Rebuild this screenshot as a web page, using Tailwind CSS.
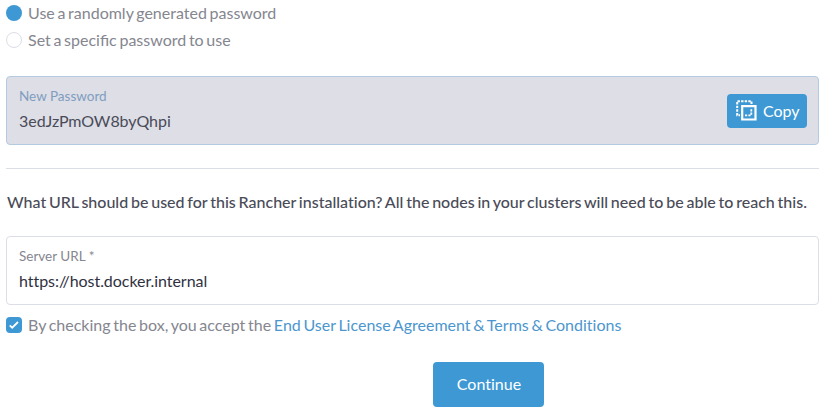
<!DOCTYPE html>
<html lang="en">
<head>
<meta charset="utf-8">
<title>Rancher setup</title>
<script src="https://cdn.jsdelivr.net/npm/@tailwindcss/browser@4"></script>
</head>
<body class="h-[412px] overflow-hidden bg-white font-['Lato',sans-serif] text-[16px] leading-5 text-[#4a4b58] [font-variant-ligatures:none] [word-spacing:-1.4px]">
<main class="flex flex-col pl-[6px] pr-[6px]">
  <div class="mt-[3px] flex h-5 items-center gap-[6px] text-[#85868f]">
    <span class="size-4 rounded-full bg-[#3d98d3]"></span><span class="pb-px">Use a randomly generated password</span>
  </div>
  <div class="mt-[7px] flex h-5 items-center gap-[6px] text-[#85868f]">
    <span class="size-4 rounded-full border border-[#dcdee7] bg-white"></span><span class="pb-px [font-variant-ligatures:normal]">Set a specific password to use</span>
  </div>
  <section class="mt-[26px] flex h-[69px] items-center justify-between rounded border border-[#b3cbe1] bg-[#dddee6] pl-3 pr-[11px]">
    <div class="flex flex-col pb-[5px]">
      <label class="h-5 text-[13.5px] text-[#7f9dc0] [word-spacing:0]">New Password</label>
      <span class="mt-[5px] tracking-[-0.05px]">3edJzPmOW8byQhpi</span>
    </div>
    <button class="flex h-[34px] w-20 items-center gap-[6px] rounded bg-[#3d98d3] pl-[9px] text-white">
      <svg class="size-[21px] shrink-0" viewBox="0 0 21 21" fill="none" stroke="currentColor">
        <path d="M15.5 4V1.2H1.2v14H4" stroke-width="2" stroke-dasharray="2.4 1.2"/>
        <path d="M6.2 6.2h13.3v13.3H6.2z" stroke-width="2.2"/>
        <path d="M9 15.3h6.3V9" stroke-width="1.8" stroke-dasharray="2.2 1.2"/>
      </svg>
      <span>Copy</span>
    </button>
  </section>
  <hr class="mt-[23px] border-[#dcdee7]">
  <p class="mt-[23px] whitespace-nowrap pl-px font-medium [word-spacing:-1.25px]">What URL should be used for this Rancher installation? All the nodes in your clusters will need to be able to reach this.</p>
  <section class="mt-6 flex h-[69px] flex-col justify-center rounded border border-[#dcdee7] pb-[5px] pl-3">
    <label class="h-5 text-[13.5px] text-[#85868f] [word-spacing:0]">Server URL *</label>
    <span class="mt-[5px] tracking-[-0.05px] text-[#30313f]">https://host.docker.internal</span>
  </section>
  <div class="mt-[10px] flex h-5 items-center gap-[6px] text-[#85868f]">
    <span class="flex size-4 items-center justify-center rounded bg-[#3d98d3] text-white">
      <svg class="size-3" viewBox="0 0 12 12" fill="none" stroke="currentColor" stroke-width="1.8"><path d="M1.7 6.3l2.5 2.4L10 3"/></svg>
    </span>
    <span class="whitespace-nowrap">By checking the box, you accept the <a class="text-[#4c96ce]">End User License Agreement &amp; Terms &amp; Conditions</a></span>
  </div>
  <button class="ml-[427px] mt-[27px] h-[45px] w-[111px] rounded bg-[#3d98d3] pb-px pl-px text-white">Continue</button>
</main>
</body>
</html>
